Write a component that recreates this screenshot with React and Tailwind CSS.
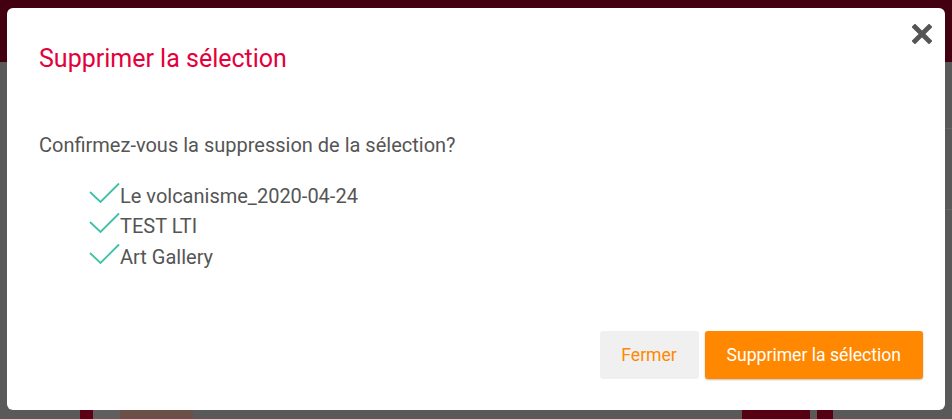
import React from "react";

const items = ["Le volcanisme_2020-04-24", "TEST LTI", "Art Gallery"];

function Check() {
  return (
    <svg width="31" height="21" viewBox="0 0 31 21" className="block shrink-0">
      <path d="M1 10 L11.5 20 L30 1.5" fill="none" stroke="#3fc1a6" strokeWidth="1.8" />
    </svg>
  );
}

export default function App() {
  return (
    <div className="relative w-[952px] h-[419px] overflow-hidden bg-[#595959]" style={{ fontFamily: "Roboto, 'Noto Sans', sans-serif" }}>
      {/* page behind the overlay */}
      <div className="h-[62px] bg-[#430010]" />
      <div className="flex justify-end">
        <div className="w-[30px] mt-[66px] border-t border-[#666] text-[#2a2a2a] text-[20px] leading-[30px] pl-[1px]">
          <div>c</div>
          <div className="text-[#444]">r</div>
          <div className="border-t border-[#666] mt-[20px]">h</div>
        </div>
      </div>
      <div className="absolute left-[80px] top-[408px] flex h-[12px]">
        <div className="w-[13px] bg-[#5c0015]" />
        <div className="w-[27px] bg-[#5f5f5f]" />
        <div className="w-[73px] bg-[#6b5048]" />
      </div>
      <div className="absolute left-[742px] top-[408px] flex h-[12px] gap-[7px]">
        <div className="w-[68px] bg-[#560014]" />
        <div className="w-[16px] bg-[#560014]" />
      </div>

      {/* modal */}
      <div className="absolute left-[7px] top-[8px] w-[938px] h-[402px] bg-white rounded-[6px] flex flex-col">
        <button className="absolute right-[13px] top-[16px] p-0">
          <svg width="20" height="20" viewBox="0 0 20 20">
            <path d="M3 3 L17 17 M17 3 L3 17" stroke="#555" strokeWidth="4.8" strokeLinecap="square" />
          </svg>
        </button>
        <h2 className="text-[#e4003a] text-[25px] leading-[28px] pl-[32px] pt-[37px]">Supprimer la sélection</h2>
        <div className="px-[32px] pt-[58px] text-[#555] text-[20px]">
          <p className="leading-[28px]">Confirmez-vous la suppression de la sélection?</p>
          <ul className="pl-[50px] pt-[21px]">
            {items.map((t) => (
              <li key={t} className="flex items-end leading-[30px] h-[30.5px]">
                <span className="mb-[8px]"><Check /></span>
                <span>{t}</span>
              </li>
            ))}
          </ul>
        </div>
        <div className="mt-auto flex justify-end gap-[6px] pr-[22px] pb-[31px]">
          <button className="h-[48px] w-[99px] rounded-[3px] bg-[#f0f0f0] text-[#ff8800] text-[17.6px]">Fermer</button>
          <button className="h-[48px] px-[22px] rounded-[3px] bg-[#ff8800] text-white text-[17.6px] shadow-[0_1px_2px_rgba(0,0,0,0.25)]">Supprimer la sélection</button>
        </div>
      </div>
    </div>
  );
}
